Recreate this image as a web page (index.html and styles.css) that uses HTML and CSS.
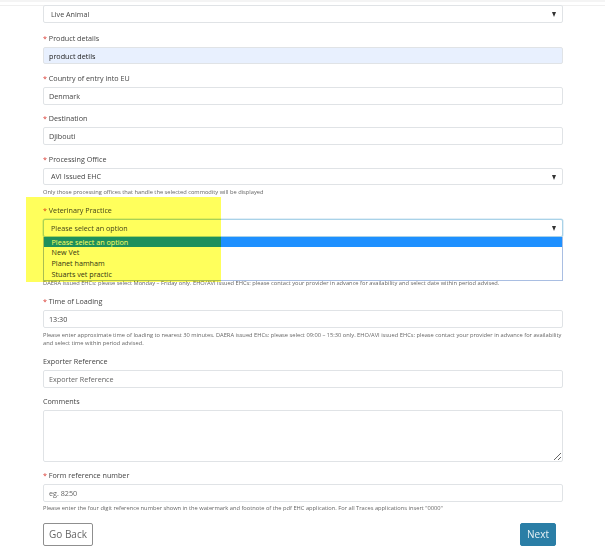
FILE: index.html
```html
<!DOCTYPE html>
<html lang="en">
<head>
    <meta charset="UTF-8">
    <meta name="viewport" content="width=device-width, initial-scale=1.0">
    <title>Application details</title>
    <link rel="stylesheet" href="styles.css">
</head>
<body>

<div class="topbar"></div>

<form class="form">
    <div class="field first">
        <div class="select-wrap">
            <select class="control"><option>Live Animal</option></select>
        </div>
    </div>

    <div class="field">
        <label class="required">Product details</label>
        <input class="control filled" type="text" value="product detils">
    </div>

    <div class="field">
        <label class="required">Country of entry into EU</label>
        <input class="control" type="text" value="Denmark">
    </div>

    <div class="field">
        <label class="required">Destination</label>
        <input class="control" type="text" value="Djibouti">
    </div>

    <div class="field">
        <label class="required">Processing Office</label>
        <div class="select-wrap">
            <select class="control"><option>AVI Issued EHC</option></select>
        </div>
        <p class="hint">Only those processing offices that handle the selected commodity will be displayed</p>
    </div>

    <div class="field">
        <label class="required">Veterinary Practice</label>
        <div class="select-wrap">
            <select class="control focused"><option>Please select an option</option></select>
            <ul class="dropdown">
                <li class="active">Please select an option</li>
                <li>New Vet</li>
                <li>Planet hamham</li>
                <li>Stuarts vet practic</li>
            </ul>
        </div>
    </div>

    <!-- date field: its label and input sit behind the open dropdown -->
    <div class="field">
        <label></label>
        <input class="control" type="text">
        <p class="hint">DAERA issued EHCs: please select Monday – Friday only. EHO/AVI issued EHCs: please contact your provider in advance for availability and select date within period advised.</p>
    </div>

    <div class="field">
        <label class="required">Time of Loading</label>
        <input class="control" type="text" value="13:30">
        <p class="hint">Please enter approximate time of loading to nearest 30 minutes. DAERA issued EHCs: please select 09:00 – 15:30 only. EHO/AVI issued EHCs: please contact your provider in advance for availability and select time within period advised.</p>
    </div>

    <div class="field">
        <label>Exporter Reference</label>
        <input class="control" type="text" placeholder="Exporter Reference">
    </div>

    <div class="field field-comments">
        <label>Comments</label>
        <textarea class="control comments"></textarea>
    </div>

    <div class="field">
        <label class="required">Form reference number</label>
        <input class="control" type="text" placeholder="eg. 8250">
        <p class="hint">Please enter the four digit reference number shown in the watermark and footnote of the pdf EHC application. For all Traces applications insert "0000"</p>
    </div>

    <div class="actions">
        <button type="button" class="btn btn-back">Go Back</button>
        <button type="submit" class="btn btn-next">Next</button>
    </div>
</form>

<div class="highlight"></div>

</body>
</html>
```

FILE: styles.css
```css
html, body {
    height: 100%;
}
body {
    margin: 0;
    background: #fff;
    color: #444;
    font-family: "Open Sans", Arial, sans-serif;
    font-size: 7.2px;
    overflow: hidden;
}
.topbar {
    height: 2px;
    margin-bottom: 3px;
    background: #f4f4f4;
    box-shadow: 0 3px 0 #fff, 0 4px 0 #efefef;
}
.form {
    width: 520px;
    margin-left: 43px;
    filter: blur(0.3px);
}
.field {
    margin-bottom: 8.6px;
}
.field.first {
    margin-top: 2px;
    margin-bottom: 10px;
}
.field-comments {
    margin-bottom: 7.6px;
}
label {
    display: block;
    height: 11px;
    line-height: 11px;
    margin-bottom: 3px;
    color: #444;
}
.required::before {
    content: "* ";
    color: #d9382f;
}
.control {
    display: block;
    box-sizing: border-box;
    width: 100%;
    height: 17.7px;
    padding: 0 5px;
    background: #fff;
    border: 1px solid #e0e3e6;
    border-radius: 2px;
    color: #444;
    font-family: inherit;
    font-size: 7.2px;
    outline: none;
}
.control::placeholder {
    color: #666;
}
.filled {
    background: #e8f0fe;
    color: #222;
}
select.control {
    appearance: none;
    padding-left: 7px;
}
.select-wrap {
    position: relative;
}
.select-wrap::after {
    content: "";
    position: absolute;
    top: 7px;
    right: 7px;
    border-left: 2.5px solid transparent;
    border-right: 2.5px solid transparent;
    border-top: 5px solid #333;
}
.focused {
    border-color: #a9d2e8;
    box-shadow: 0 0 0 0.5px #c4e0ef;
}
.dropdown {
    position: absolute;
    z-index: 2;
    top: 100%;
    left: 0;
    right: 0;
    box-sizing: border-box;
    height: 44px;
    margin: 0;
    padding: 0;
    list-style: none;
    background: #fff;
    border: 1px solid #a9bee2;
    border-top: 0;
}
.dropdown li {
    height: 10.7px;
    line-height: 10.7px;
    padding-left: 7.5px;
    color: #333;
}
.dropdown .active {
    background: #1e90ff;
    color: #fff;
}
.hint {
    margin: 2.5px 0 0;
    font-size: 5.72px;
    line-height: 8.5px;
    color: #666;
}
.comments {
    height: 52px;
    padding: 4px 5px;
    resize: vertical;
}
.actions {
    display: flex;
    justify-content: space-between;
    align-items: center;
    margin-top: 10px;
    padding-right: 7px;
}
.btn {
    box-sizing: border-box;
    height: 23px;
    padding: 0;
    border-radius: 2px;
    font-family: inherit;
    font-size: 10px;
}
.btn-back {
    width: 50px;
    background: #fff;
    border: 1px solid #8f8f8f;
    color: #666;
}
.btn-next {
    width: 36px;
    background: #2a7ea6;
    border: 1px solid #2a7ea6;
    color: #e8f2f6;
}
.highlight {
    position: absolute;
    z-index: 3;
    top: 197px;
    left: 26px;
    width: 195px;
    height: 85px;
    background: #ffff5c;
    mix-blend-mode: multiply;
}
```
